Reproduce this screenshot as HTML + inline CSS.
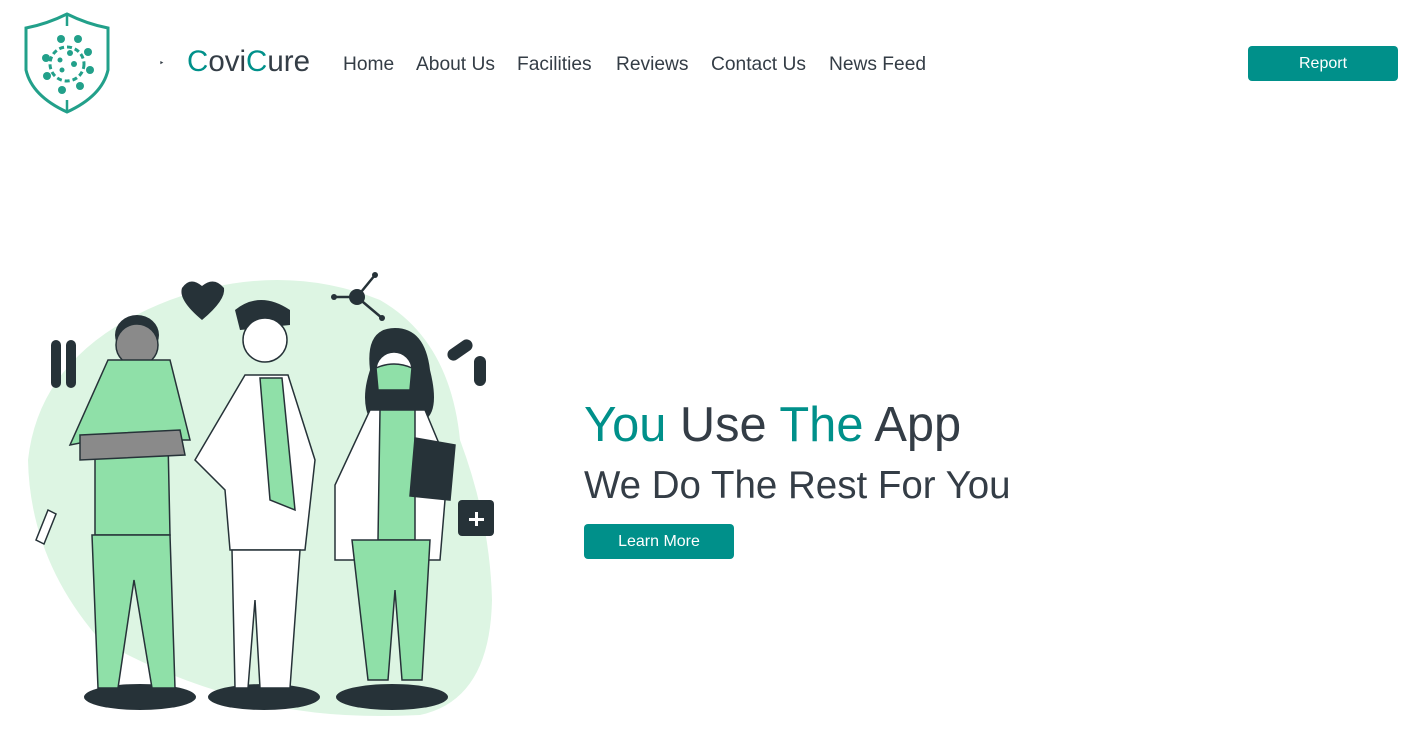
<!DOCTYPE html>
<html><head><meta charset="utf-8"><style>
*{margin:0;padding:0;box-sizing:border-box}
body{width:1416px;height:742px;background:#fff;font-family:"Liberation Sans",sans-serif;position:relative;overflow:hidden;color:#343d46}
.abs{position:absolute}
.nav a{position:absolute;top:54px;font-size:19.2px;color:#343d46;text-decoration:none;white-space:nowrap}
.btn{position:absolute;background:#00908a;color:#fff;border-radius:4px;text-align:center;font-size:16px}
.t{color:#00908a}
</style></head><body>
<svg class="abs" style="left:22px;top:12px" width="90" height="102" viewBox="0 0 90 102">
<path d="M45 2 Q65 12 86 16 L86 58 Q80 84 45 100 Q10 84 4 58 L4 16 Q25 12 45 2Z" fill="none" stroke="#22a08a" stroke-width="3"/>
<line x1="45" y1="2" x2="45" y2="14" stroke="#22a08a" stroke-width="2.5"/><line x1="45" y1="88" x2="45" y2="100" stroke="#22a08a" stroke-width="2.5"/>
<circle cx="45" cy="52" r="17" fill="none" stroke="#22a08a" stroke-width="3" stroke-dasharray="5 3"/>
<g fill="#22a08a"><circle cx="48" cy="41" r="3"/><circle cx="38" cy="48" r="2.5"/><circle cx="52" cy="52" r="3"/><circle cx="40" cy="58" r="2.5"/>
<circle cx="39" cy="27" r="4"/><circle cx="56" cy="27" r="4"/><circle cx="66" cy="40" r="4"/><circle cx="68" cy="58" r="4"/><circle cx="58" cy="74" r="4"/><circle cx="40" cy="78" r="4"/><circle cx="25" cy="64" r="4"/><circle cx="24" cy="46" r="4"/></g></svg>
<div class="abs" style="left:159px;top:58px;font-size:9px">&#x2023;</div>
<div class="abs" style="left:187px;top:45px;font-size:29.5px"><span class="t">C</span>ovi<span class="t">C</span>ure</div>
<div class="nav"><a style="left:343px">Home</a><a style="left:416px">About Us</a><a style="left:517px">Facilities</a><a style="left:616px">Reviews</a><a style="left:711px">Contact Us</a><a style="left:829px">News Feed</a></div>
<div class="btn" style="left:1248px;top:46px;width:150px;height:35px;line-height:35px">Report</div>

<svg class="abs" style="left:20px;top:260px" width="480" height="460" viewBox="0 0 480 460">
<path d="M150 40 Q260 0 360 40 Q430 80 440 180 Q470 260 472 340 Q470 440 400 455 Q300 460 230 440 Q150 420 80 380 Q10 300 8 200 Q20 90 150 40Z" fill="#ddf5e3"/>
<g stroke="#263238" stroke-width="2.5"><line x1="314" y1="37" x2="337" y2="37"/><line x1="337" y1="37" x2="355" y2="15"/><line x1="337" y1="37" x2="362" y2="58"/></g>
<g fill="#263238">
<ellipse cx="120" cy="437" rx="56" ry="13"/><ellipse cx="244" cy="437" rx="56" ry="13"/><ellipse cx="372" cy="437" rx="56" ry="13"/>
<path d="M162 28 Q170 16 182 26 Q194 16 204 28 Q206 40 182 60 Q158 40 162 28Z"/>
<circle cx="337" cy="37" r="8"/><circle cx="314" cy="37" r="3"/><circle cx="355" cy="15" r="3"/><circle cx="362" cy="58" r="3"/>
<rect x="31" y="80" width="10" height="48" rx="5"/><rect x="46" y="80" width="10" height="48" rx="5"/>
<rect x="438" y="240" width="36" height="36" rx="4"/>
<rect x="454" y="96" width="12" height="30" rx="6"/><rect x="426" y="84" width="28" height="12" rx="6" transform="rotate(-35 440 90)"/>
<ellipse cx="117" cy="75" rx="22" ry="20"/><path d="M215 50 Q240 30 270 50 L270 65 L220 70Z"/><path d="M350 110 Q345 68 375 68 Q405 68 410 110 Q420 150 405 160 L350 160 Q340 140 350 110Z"/>
</g>
<rect x="455" y="252" width="3" height="14" fill="#fff"/><rect x="449" y="258" width="15" height="3" fill="#fff"/>
<g stroke="#263238" stroke-width="1.5">
<circle cx="117" cy="85" r="21" fill="#8a8a8a"/>
<path d="M88 100 L150 100 L170 180 L148 180 L150 275 L75 275 L75 180 L50 185 Z" fill="#8fe0a8"/>
<path d="M60 175 L160 170 L165 195 L60 200Z" fill="#8a8a8a"/>
<path d="M72 275 L150 275 L155 428 L132 428 L114 320 L98 428 L78 428Z" fill="#8fe0a8"/>
<circle cx="245" cy="80" r="22" fill="#fff"/>
<path d="M225 115 L268 115 L295 200 L285 290 L210 290 L205 230 L175 200 Z" fill="#fff"/>
<path d="M240 118 L262 118 L275 250 L250 240Z" fill="#8fe0a8"/>
<path d="M212 290 L280 290 L270 428 L240 428 L235 340 L228 428 L215 428Z" fill="#fff"/>
<circle cx="374" cy="110" r="18" fill="#fff"/>
<path d="M356 108 Q374 100 392 108 L390 130 L358 130Z" fill="#8fe0a8"/>
<path d="M350 150 L405 150 L430 210 L425 240 L420 300 L315 300 L315 225 Z" fill="#fff"/>
<path d="M360 150 L395 150 L395 280 L358 280Z" fill="#8fe0a8"/>
<path d="M332 280 L410 280 L402 420 L382 420 L375 330 L368 420 L348 420Z" fill="#8fe0a8"/>
<path d="M395 178 L435 185 L430 240 L390 236Z" fill="#263238"/>
<path d="M16 280 L28 250 L36 254 L24 284Z" fill="#fff"/>
</g>
</svg>

<div class="abs" style="left:584px;top:397px;font-size:48.8px;white-space:nowrap"><span class="t">You</span> Use <span class="t">The</span> App</div>
<div class="abs" style="left:584px;top:464px;font-size:38.5px;white-space:nowrap">We Do The Rest For You</div>
<div class="btn" style="left:584px;top:524px;width:150px;height:35px;line-height:35px">Learn More</div>
</body></html>
